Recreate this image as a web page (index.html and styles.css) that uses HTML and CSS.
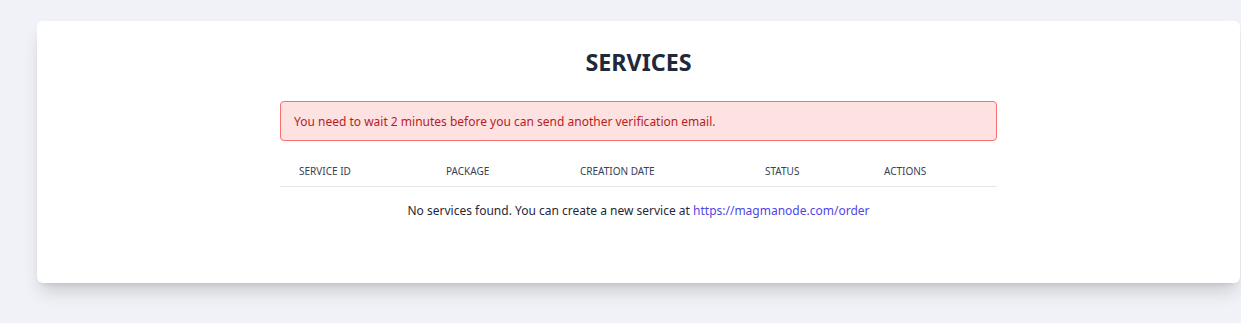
FILE: index.html
```html
<!DOCTYPE html>
<html lang="en">
<head>
    <meta charset="UTF-8">
    <meta name="viewport" content="width=device-width, initial-scale=1.0">
    <title>Services</title>
    <link rel="stylesheet" href="styles.css">
</head>
<body>
    <div class="card">
        <h1>SERVICES</h1>
        <div class="content">
            <div class="alert">You need to wait 2 minutes before you can send another verification email.</div>
            <div class="table">
                <div class="table-head">
                    <div>Service ID</div>
                    <div>Package</div>
                    <div>Creation Date</div>
                    <div>Status</div>
                    <div>Actions</div>
                </div>
                <p class="empty">No services found. You can create a new service at <a href="#">https://magmanode.com/order</a></p>
            </div>
        </div>
    </div>
</body>
</html>
```

FILE: styles.css
```css
body {
    margin: 0;
    padding: 21px 1px 40px 37px;
    background-color: #f1f2f7;
    font-family: "Noto Sans", "Open Sans", sans-serif;
    color: #1f2937;
}
.card {
    background: #fff;
    border-radius: 6px;
    height: 262px;
    box-sizing: border-box;
    padding-top: 27px;
    box-shadow: 0 12px 18px -4px rgba(0, 0, 0, 0.16), 0 4px 6px -4px rgba(0, 0, 0, 0.12);
}
h1 {
    margin: 0;
    text-align: center;
    font-size: 23.3px;
    line-height: 28px;
    font-weight: 700;
    color: #1e293b;
}
.content {
    width: 717px;
    margin: 25px auto 0;
}
.alert {
    height: 40px;
    box-sizing: border-box;
    padding: 0 13px;
    display: flex;
    align-items: center;
    background: #fee2e2;
    border: 1px solid #f87171;
    border-radius: 4px;
    color: #b91c1c;
    font-size: 12px;
}
.table {
    margin-top: 17px;
}
.table-head {
    display: grid;
    grid-template-columns: 147px 134px 185px 119px 132px;
    border-bottom: 1px solid #e5e7eb;
    font-size: 10px;
    text-transform: uppercase;
    color: #374151;
    line-height: 14px;
    padding: 6px 0 8px;
}
.table-head div {
    padding-left: 19px;
}
.empty {
    margin: 15px 0 0;
    text-align: center;
    font-size: 12px;
    color: #1f2937;
}
.empty a {
    color: #4f46e5;
    text-decoration: none;
}
```
